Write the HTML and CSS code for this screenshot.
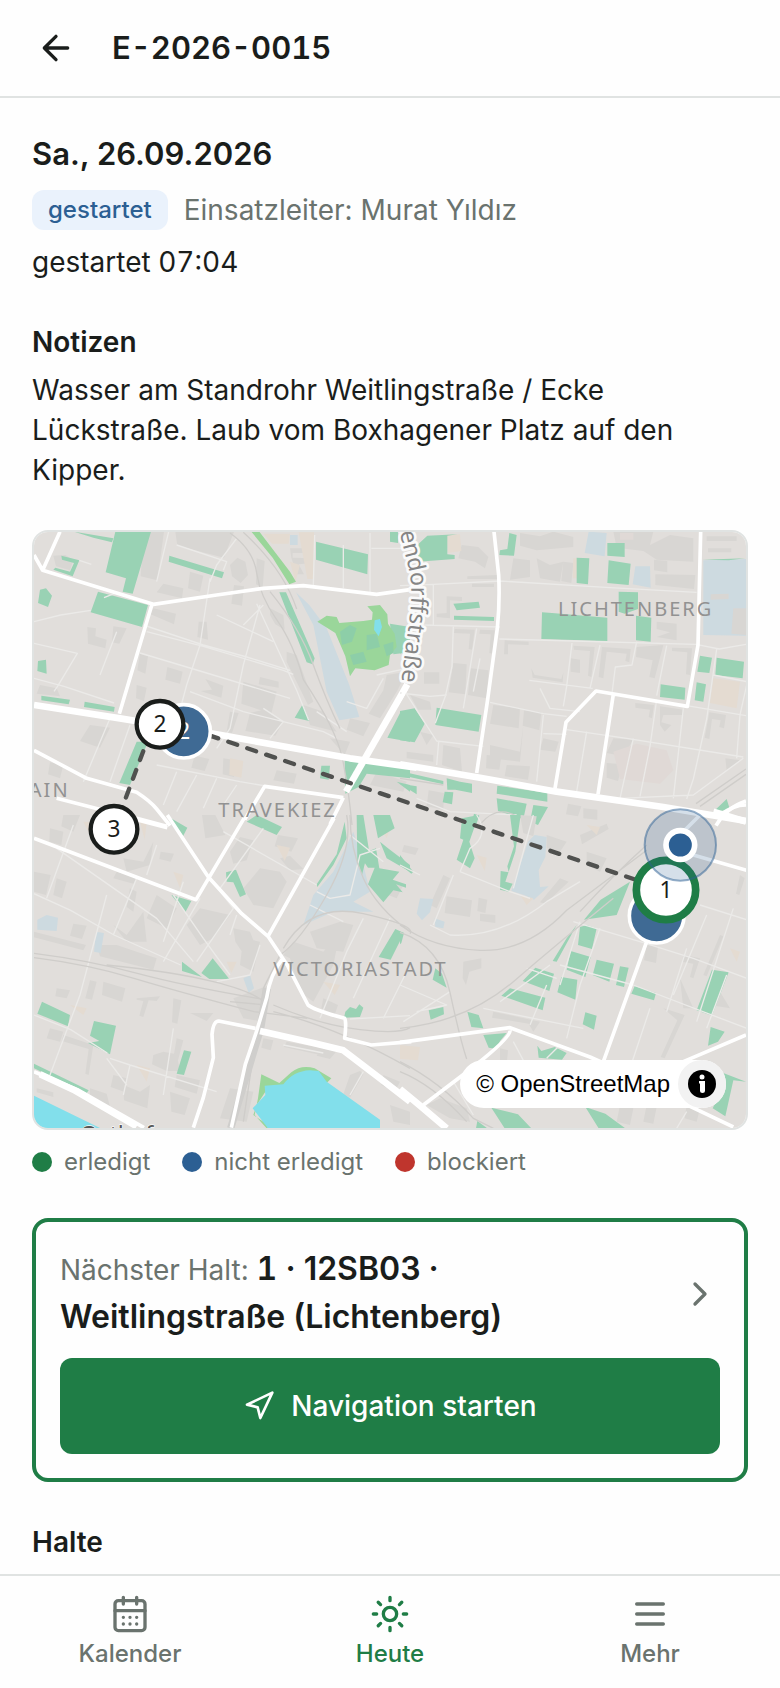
FILE: index.html
```html
<!DOCTYPE html>
<html lang="de">
<head>
    <meta charset="UTF-8">
    <meta name="viewport" content="width=device-width, initial-scale=1.0">
    <title>E-2026-0015</title>
    <link rel="stylesheet" href="styles.css">
</head>
<body>
    <header class="header">
        <button class="back-btn" type="button" aria-label="Zurück">
            <svg class="icon" viewBox="0 0 24 24"><path d="M12 19l-7-7 7-7M19 12H5"/></svg>
        </button>
        <h1 class="title tabular">E-2026-0015</h1>
    </header>

    <main class="content">
        <section class="summary">
            <h2 class="date">Sa., 26.09.2026</h2>
            <div class="status-row">
                <span class="badge">gestartet</span>
                <span class="muted">Einsatzleiter: Murat Yıldız</span>
            </div>
            <p class="tabular">gestartet 07:04</p>
        </section>

        <section class="notes">
            <h3>Notizen</h3>
            <p>Wasser am Standrohr Weitlingstraße / Ecke Lückstraße. Laub vom Boxhagener Platz auf den Kipper.</p>
        </section>

        <section class="overview">
            <div class="map">
                <svg class="map-canvas" viewBox="0 0 2136 1788" preserveAspectRatio="xMidYMid slice" role="img" aria-label="Karte der Halte">
                    <!-- tile north west -->
                    <g transform="translate(-12 -21)">
                        <path class="building" d="M70 92l36-2 24 16-10 30-42-12zM340 20l62 0-20 146-50-12zM436 20l176 0-30 78-140-36zM400 176l60 14-4 30-76-18zM480 140l40 12-10 48-36-10zM600 120l22-22 24 12 8 40-22 24-26-20zM612 180l30 4-6 58-32-6zM680 100l24 8-6 80-20-10zM370 250l68 16-6 32-70-30zM172 306l26 4-2 24 34 10-4 26-52-14zM250 304l40 6-22 46-22-4zM330 386l24 8-8 52-24-10zM412 426l46 14-8 36-44-12zM506 290l24 0 4 54-32-8zM526 462l54 20-6 36-62-20 34-4zM640 470l100 30-16 66-90-30zM690 456l56 14 0 18-60-10zM720 250l40 20 4 44-28-16-16-28zM770 380l30 10 50 140-16 10-64-130zM660 564l40-10 60 34-24 44-90-14zM600 560l26 4-20 60-16-4zM820 540l60 20 40 60-80-20zM900 640l60 10-16 40zM1070 450l60-10-30 60-50 80-34-14 44-70zM960 580l60 14-20 40-50-20zM320 480l30 8-8 40-24-8zM580 700l36 6-4 50-34-8zM494 692l44 10-14 36-40-10zM180 600l60 8-30 60-60-20zM30 480l50 10 10 24-70-8zM60 712l40 8-10 40-36-12zM740 736l60 10-8 30-62-10zM1040 740l90 30-10 30-100-20zM780 70l68 0 0 14-60 0 0 14 58 2 0 14-40 4 16 30-22 0-16-50z"/>
                        <path class="sand" d="M700 26l80 0-4 30-50 0zM806 22l46 0 0 140-20 0zM600 700l40 8-6 50-36-8zM780 110l30 10-14 50z"/>
                        <path class="industry" d="M798 202l40 38 52 70 68 170 30 96-60 10-38-86-40-200zM780 30h23v30h-23z"/>
                        <path class="park" d="M132 20l118 20-4 12-56-14zM256 20h107l-55 186-30-6 10-40-61-18zM94 92l54 14-20 48-58-20 6-6 44 12 12-26-36-10zM204 200l150 40-18 66-154-44zM418 92l164 50-6 18-160-50zM30 194l18-4 18 22-12 34-30-12zM24 408l24-4 2 42-28-8zM34 512l86 12-4 14-82-12zM164 530l90 16-2 14-90-14zM320 650h34l-54 130-32-6zM858 50l156 38-2 60-154-44zM748 202h20l86 198-6 18-18-6zM818 538l20 50-44-10zM1112 560l28-2v92l-68-12zM874 722h26l-4 42-26-4zM944 706l196 20v34l-130-14-24 40-40 20zM1100 770l40 10v20zM1080 20h24v34l-24-4zM1080 296l60 10v76l-50 6z"/>
                        <path class="meadow" d="M664 20h24l92 120 18 30-20 8-50-80zM862 290l28-18 30 4 8 18 72-6 26-4 2-22-16-18 38-4 22 28 2 28 20 30 6 40-20 24-4 30-42 16-58-6-16 24-14-60-30-70z"/>
                        <path class="park soft" d="M930 320l30-20 20 10-14 40-30 10zM1010 330l30-4 10 40-40 10zM960 390l40-10 10 30-40 10zM1060 360l30-10v34l-20 10z"/>
                        <path class="water" d="M1034 286l16-4 6 24-10 28-14-20z"/>
                        <path class="lane" d="M12 290l80-20 90-14M12 355l130 30-60 100-10 14M148 106l36 12M262 202l-40 16M340 300l180 60 130 36 130 40M350 320l170 44 240 72 30 12M330 384l200 60 250 76M416 20l-36 150M440 60l150 50-10 26M540 160l-30 200-40 120-16 60M690 240l-50 180-40 190-40 60M560 270l170 80M680 236l120 260 36 90M640 300l60-60M12 460l90 24 150 50M260 320l-50 130M620 40l-60 80-20 50M480 500l160 60 240 60 40 20M700 550l60 40-40 50M854 30l-4 150M940 60v130M1020 24v180M1024 70h116M240 580l-80 190M300 600l-60 170M380 720l250 50 120 20M440 740l-40 100M500 750l-60 110M560 760l-40 90M620 780l-40 60M860 560l90 60M1060 460l-50 90-60-20M1040 450l90-20"/>
                        <path class="rail" d="M600 24q70 50 80 120t60 140 80 180q100 150 118 240t28 196M720 200q90 110 130 220t80 190M640 22q120 110 160 230"/>
                        <path class="road" d="M90 20L38 136l332 102 190-28 140-20 120-8 220 26 100-14M12 90l26 46M366 238l-98 328M12 676l158 84 150 42q40 26 60 50l40 50M80 820l140 36M320 880l90 24M940 818l-236-34-60 100M940 818l-40 80"/>
                        <path class="road wide" d="M12 540l258 40 290 48 400 72 200 28"/>
                        <path class="road wide" d="M1132 478L948 800"/>
                    </g>
                    <!-- tile north east -->
                    <g transform="translate(1098 -21)">
                        <path class="building" d="M185 60l50 6 30 30-10 34-30-20-50-10zM360 24l60 10 40-14 60 16v30l-110 10-50-14zM340 100l50 6v50l-60 8zM410 100l40 20 40-10-10 60-60-10zM490 110l30 4-6 60-30-6zM202 154l90-4v12h-90zM216 176h66v10h-66zM140 214l46 2v12l-36-2v54l-40-4v-10l30-2zM164 312l60 2-8 60-10-2 4-46-48-2zM240 314l44 2-6 70-10-2 4-56-34-2zM160 414l40 4-4 90-50-6zM212 430l54 6-6 84-56-10zM72 442h46v34h-46zM314 346l72 4v10l-62-2v30h-12zM394 430l10 20 80 12 6-20-2 30-90-14zM520 362l64 4-10 90-10-4 6-74-48-4zM606 366l86 6-4 40-12-4 4-22-60-6-10 80-14-4zM512 400l28 4v40l-28-4zM710 366l80-6-26 100-16-4 10-50-50-10zM816 368l60 2-6 80-12-2 4-66-46-4zM640 20l120 0-10 40 60-30 70 10v70l-110-6-40-26-80-10zM766 148l120 2-4 42-116-12zM762 104l40 4v34l-40-6zM770 290l60 6v50l-60-10 40-14-40-10zM920 34l90 0v14h-90zM924 70h70v12h-70zM280 540l80 10-4 60-86-14zM372 556l52 6-6 54-50-14zM270 660l90 20 10-80-10 110-90-10zM430 640l46 10-10 30-46-6zM706 534l56 6-6 40-10-4 4-22-44-6zM780 544l70 10v16l-60 0-6 22 30 8-20 20-14-20zM928 562l50 8-6 40-14-4 4-20-26-4-8 60-14-4zM640 640l60 4-30 50-50-10zM720 690l60 0 20 30-16 40-60-6-10-40zM620 714l48 4-14 50-34-10zM976 700l44 6-40 30zM30 510l60 20 4 24-40 0zM60 620l40 10-20 30zM130 660l50 10 6 70-60-20zM20 680l80 10v20l-80-10zM504 836l40 8-10 30-36-6zM550 850l42 4v30l-42-4zM86 796l46 8-2 50-50-10zM260 690l44 4-6 40-40-4zM320 720l70 4-6 40-70-10z"/>
                        <path class="sand" d="M140 30l40-2 4 50-40 6zM940 460l80 10-10 80-80-16zM520 100l16 0-4 60-14 0z"/>
                        <path class="clinic" d="M640 680l70-24 90 20 20 60-40 40-120-14zM660 24l40 0v20h-40z"/>
                        <path class="industry" d="M910 106l128-4v230l-128-2zM566 20l54 4-6 70-60-10zM706 124h44l2 64-54-10z"/>
                        <path class="building" d="M932 208l54-2v16l-54 2zM1000 250h38v80l-44-4z"/>
                        <path class="park" d="M52 60l30-28 90-4-30 4v56l22 2v12l-110 8zM328 24l22 6-8 62-44-2 2-14 22-4zM530 98l38 2-4 78-34-4zM622 54h52v42l-52-4zM626 106l66 10-6 64-64-6zM656 200l58 2v50l-40 14-18-6zM426 262l30 2 166 14v70l-198-6zM708 272l46 6-2 72-44-4zM160 236l76-6 4 18-70 8zM162 272l120 4v12l-120-4zM900 392l36 6-8 46-36-4zM950 398l82 12-4 50-82-10zM890 472l28 6-8 52-26-4zM782 478l74 10-2 36-74-8zM110 548l134 22-8 50-130-20zM0 558l44-8 30 46-30 56-44-6zM0 306l14 0v70l-14 10zM0 738l130 30v10L0 750zM0 776l50 8v24zM140 760l40 10 36 6v28l-50-10-24 0zM134 800l26 2-4 36-28-6zM292 782l150 22v26l-152-24zM290 820l90 16-10 46-76-24zM400 840l44 6-30 54-24-10zM222 866l16 6-10 28h-14zM980 822l10 32-50 6zM906 104l130-4-50 6z"/>
                        <path class="lane" d="M0 182l100-4 200-10 330 20 260 14M70 300l230 6M298 342l590 16 70 14 80-14M100 180v120M160 304l-4 120-20 90-30 80M230 310l-20 120-20 120M0 504l90 10 50-4M270 532l160 34 70 8M20 508l90 140 140 16M116 650l-6 70M240 400l-20 100M430 570l-20 200M430 626l70 2M500 614l180 26 350 56M560 620l-30 180M516 354l-16 130-10 60M600 360l-30 130M710 350l-14 70-50 6-10 80M800 362l-30 150M388 466l190 24M420 490l30 60 90 10M700 640l-40 180M770 524l-20 140-30 150M850 550l-30 270M950 372l-30 210-40 180-20 60M1040 480l-20 90-10 130M940 450l100 20M860 542l180 30M660 820l220-10 150-110M50 820l100 40 200 10"/>
                        <path class="rail" d="M888 836l150-104M900 844l138-96M0 760l130 20M240 898q50-60 110-24"/>
                        <path class="road" d="M282 20l14 130q4 80-4 160l-30 220-32 214M902 20l-8 340-32 184-274-46-90 94-34 204M640 508l-46 300M1038 828q-60 20-90 74M-10 540l30-50"/>
                        <path class="road wide" d="M0 718l240 40 230 42 320 46 248 42"/>
                    </g>
                    <!-- tile south west -->
                    <g transform="translate(-12 849)">
                        <path class="building" d="M12 170l50 10-14 60-36-10zM80 190l30 10-14 50-26-10zM60 40l40 10-6 40-36-10zM100 0l50 0-20 50-36-16zM280 130l60 10 30-60-10 70-70 20zM260 170l60 20-10 16-60-16zM300 220l20 10-10 60-20-14zM392 110l40 6-10 24-34-8zM516 0l40 0 30 60-60 10zM600 110l30-44 40 10-20 60-40 10zM744 60l60 10-20 40-50-16zM750 130l30-8 40 40-40 4zM640 220l50-60 60 10 20 30-40 80-60-10zM380 240l60 40-30 60-60-30zM470 330l40-50 90 20-50 70-40 20zM250 330l40 30 50-70 10 90-60 0zM130 326l40 6-14 40-36-10zM200 390l60 0 60 20 60 20-10 34-160-40zM12 350l156 40-8 16-150-40zM610 340l50 10 16 40-40 20-20-30zM640 370l50 10-20 90-40-20zM80 520l40 6-10 24-34-6zM180 496l20 4-14 54-20-4zM220 500l66 20-10 40-60-20zM320 550l70-6-10 14-24-2-16 50-12-4 12-44-20-4zM430 550l24 6-12 70-16-4zM480 594l70 0-20 24-20-10zM370 720l30-10 40 8 10 50-40 0-44-20zM440 670l20 6-16 60-14-6zM100 660l90 30-14 90-10-4 10-74-80-24zM60 640l40 10-10 30-40-10zM250 780l40 10-8 40-40-14zM280 810l50 20 30-20-8 70-70-24zM440 780l70 16-10 40-66-20zM420 830l60 20-16 50-40-10zM180 820l50 16 10 40-60-24zM20 820l50 12v14l-50-14zM700 670l30 6-8 30-28-8zM770 680l110 20-8 20-110-24zM870 700l50 8-20 24-40-10zM960 780l30-12 10 10-40 70-20-10zM1060 780l50 20-16 30-40-20zM1080 870l60 20v40l-50-10zM790 380l90 30 50-60-20 100-60 110-40-30-30-100-20-10zM840 350l90-30 40 10-30 80-80-10zM880 550l44 20-10 30-40-20zM600 820l70 10-20 90-80-10zM1060 180l60 30-20 40-50-20z"/>
                        <path class="building" d="M610 550l110-40-20 110-60-10z"/>
                        <path class="sand" d="M160 20l30 0-10 40zM330 20l20 4-6 50zM430 170l30 10-10 40zM590 440l30 0-16 34zM320 750l40 10-10 40zM880 500l50 10-16 30zM740 90l40 8-16 40zM1040 20l40 20-10 30zM120 570l50 10-10 20z"/>
                        <path class="industry" d="M910 170l60-120 20 60 30 120-50 30 60 30-120 0-90 40 30-90zM50 300l34 8-4 40-58-4v-30zM198 350l24 4-10 60-20-4zM640 490l20-10 12 40-16 14z"/>
                        <path class="park" d="M410 2l62 36-16 32-30-40zM650 20l30-20 76 36-16 24zM588 172l30-8 30 74-18 8-20-44-20-2zM424 240l60 18-18 34zM456 440l60 46-60-18zM548 430l50 62h-60l-24-18zM944 20l6 50-40 80-48 66-2-8 60-90zM980 0h20l16 100-20 80-14-40zM1030 0h50l14 40-50 30zM1050 80l24 20 66 50v20l-70-40zM988 120l50-20 10 60 60 10-20 24 40 14v10l-30-10 20 24-28-6-30 36-46-54 20-50-20 0zM1096 342l26 12-40 80-36-8zM36 560l84 40-6 34-92-38zM192 618l66 14-18 86-66-34 34-6-28-16zM462 706l22 4-22 70-22-4zM946 590l14-14 18 6 10-14 12 10-10 28-48 2zM12 746l164 80-6 8L12 760z"/>
                        <path class="meadow" d="M694 778l54 26 36-32q30-24 70-12l50 30-14 14-60-20-70 30-50 10-30 46-10 30 50 34-10 6-36-40 10-50z"/>
                        <path class="water" d="M704 812l56-4q30-40 80-42l26 2 24 32 160 114v26H714l-46-60 38-40zM12 842l200 98H12z"/>
                        <path class="lane" d="M130 30L50 250M12 236l110 50 130 74 200 90M230 240l-80 300-90 240M430 240l90 130 80 110M510 250l-110 190M320 190l-70 170M12 600l110 44 110 70M240 730l60 20 260 80M230 730l60 80M80 100l300 210 110 130M540 190l70 90-110 160M580 50l280 160M700 40l-130 180M620 300l-20 60M690 390l-30 90-100 20M380 90l-30 90M460 200l-60 180M1050 100l-60 20-30 120-60 10-40-20M960 60l100 80M1000 310l-50 100-80 200M1080 310l-110 240M1140 450l-80 160M960 612l180-10M840 270l100 50M760 690l120 24M1000 770l-40 70M300 750l-20 90M430 640l-30 200"/>
                        <path class="rail" d="M12 415q160 20 310 60t390 80M12 428q160 20 300 62t360 100l160 20M230 450q200 20 320 50t150 60M950 0q20 100-60 240t-140 180l-50 100-60 400M960 0q0 100 40 190t140 160M760 400q80-140 240-104t140 60M730 570q140 60 260 74t150-6M730 590q200 50 410 170M600 560l110 10"/>
                        <path class="rail-bed" d="M712 520l-20 120-90 300"/>
                        <path class="road" d="M412 0l123 186 100 110 79 68 60 90 60 116q20 16 110 40 6 10 0 60l80 20 120-10M642 10L498 254 12 70M320 14l92 24M912 10L714 364M760 428q-40 50-50 120l-30 100-34 100-42 190M676 640l-110-22q-16 0-20 40l4 70-30 120-30 90M12 770l130 54 200 114"/>
                        <path class="road wide" d="M690 648l160 36 90 22 110 84 90 70M30 778l100 46 190 110"/>
                    </g>
                    <!-- tile south east -->
                    <g transform="translate(1098 849)">
                        <path class="building" d="M130 180l20 10-40 90-20-10zM140 244l76 12-6 50-76-12zM236 248l26 6-6 40-24-6zM240 296l46 4v24l-46-6zM540 60l80-34 6 16-80 46zM480 190l26 10-70 66-16-4zM12 90l44 10-10 20-40-10zM190 440l54-10v30l-36 10-10 40-10-20zM280 590l140 30-20 30-14-24-110-18zM300 700l24 6-4 40-20-10zM740 390l34 4-6 50-36-8zM850 420l50 10-20 60-10-4 10-40-34-6zM840 490l40 90-30 0zM960 360l10 4-50 120-10-4zM960 530l-30 40 60 10zM790 580l64 20-60 130-12-4 50-110zM120 850l80 30 10 40-60-10-70-40zM660 870l40 10-10 50-40-10zM740 870l30 6-10 50-30-6zM560 110l60 20-20 40-40-20zM860 870l40 10-10 40-36-10zM1020 180l14 10-16 50-10-4zM440 60l60 20-20 30-40-10zM360 0l50 4-10 60-30-10z"/>
                        <path class="industry" d="M384 80l20-20 36 6-4 60-20 40 4 50 26-2-44 40-30-14-38-12zM60 250l40 2-10 40-24 24-16-20zM104 310l30 10-4 20-24-4z"/>
                        <path class="sand" d="M560 30l40 6-10 24zM230 120l30 8-6 40zM0 690l60 6-6 40-54-4zM360 240l40 10-20 20zM990 400l30 10-10 30z"/>
                        <path class="park" d="M186 10l50-10-28 80 16 50-14 30-40-26 20-60-10-4zM330 0h32l-16 110-30 90 22 6-12 24-26-6 2-56 24 4-4-18 20-60zM0 120l40 50-6 6-34-28zM690 200l-40 100-98 14 50-60zM540 336l20-6 30 10-14 62-42-12zM500 370l30-40-60 110-12-2zM512 408l60 18-16 60-56-22zM590 434l52 12-14 54-50-20zM660 454l26 4-14 58-24-6zM406 458l56 18-14 52-80-30zM484 486l48 8-6 60-54-22zM330 520l106 28-8 38-124-44zM556 592l34 10-8 42-34-16zM704 514l64 20-6 22-68-20zM936 464l50 8-50 130-46-16zM932 636l42 14-20 30-30 12zM106 460l20 16 14 42-42-24zM86 586l44-10 2 22-40 16zM202 590l34 10 14 40-36-4zM250 660l70-6-20 24-10 24-24-4zM412 692l12 16 40-12 36 18-14 20-70-6zM274 878l80 20 40 42h-80zM556 876l60 20 60 44h-80zM232 918l30 22h-34zM960 770l78 30-38-4-24 108-38-24 30-60zM0 350l12 4-8 30-4 4z"/>
                        <path class="lane" d="M60 180L0 150M180 170l150 60 60 20M520 320l200 60 160 50 160 60M540 320l-60 190M600 340l-60 170-40 160M480 450l220 60 340 130M380 460l90 30M440 510l-50 120M250 580l300 60M1000 280l-110 340M920 300l-100 240M860 400l-60 190M980 480l-60 160M300 560l150-110M750 580l-60 180M0 510l140 60-90 20M150 530l-140 90M340 680l30 56M480 690l-40 40M230 0q40 60-20 100l-30 70M400 0l-60 220M90 330l60 30q150 10 290-100l100-60M900 270l140 44M160 180l-60 150M160 800l60 100M860 890l-30 50"/>
                        <path class="rail" d="M0 330q100 70 240 76t260-120l240-180M0 352q120 40 150 180t50 200M0 640q200-20 340-140t300-250M740 90Q640 180 540 290M0 740q120 60 220 170l60 30M0 770q100 40 200 150"/>
                        <path class="road" d="M740 380L610 740M0 682l330-44 240 88 40 18M330 646q4 20-110 110L70 870M1038 660L850 740M900 0l-100 100M880 120l160 46M960 0q40-30 78-30M820 850l180 86"/>
                        <path class="road wide" d="M940-10l98 30M0 822l60 50 80 68"/>
                    </g>

                    <g class="labels">
                        <text x="1572" y="251">LICHTENBERG</text>
                        <text x="553" y="856">TRAVEKIEZ</text>
                        <text x="718" y="1332">VICTORIASTADT</text>
                        <text x="-66" y="795">HAIN</text>
                    </g>
                    <path id="street" class="street-path" d="M1094 -24C1104 50 1132 110 1132 180S1112 350 1098 490"/>
                    <text class="street"><textPath href="#street" startOffset="6">lendorffstraße</textPath></text>
                    <text class="station" x="138" y="1834">Osthafen</text>

                    <path class="route" d="M366 556L1896 1074"/>
                    <path class="route" d="M366 556L240 892"/>

                    <!-- stops -->
                    <g class="stops">
                        <circle class="visited" cx="449" cy="598" r="80"/>
                        <text class="visited-no" x="449" y="622">2</text>
                        <circle class="stop" cx="378" cy="577" r="70"/>
                        <text x="378" y="601">2</text>
                        <circle class="stop" cx="240" cy="892" r="70"/>
                        <text x="240" y="916">3</text>
                        <circle class="visited" cx="1868" cy="1151" r="82"/>
                        <circle class="stop next" cx="1896" cy="1074" r="89"/>
                        <text x="1896" y="1098">1</text>
                    </g>
                    <circle class="accuracy" cx="1939" cy="939" r="107"/>
                    <circle class="position" cx="1939" cy="939" r="43"/>
                </svg>
                <div class="attribution">
                    <a href="#">© OpenStreetMap</a>
                    <button class="info-btn" type="button" aria-label="Quellenangaben">
                        <svg viewBox="0 0 28 28"><circle cx="14" cy="14" r="14"/><circle class="info-mark" cx="14" cy="7" r="2.5"/><path class="info-mark" d="M11 11h6v10q0 2-2.500 2t-2.500-2v-7.500h-1z"/></svg>
                    </button>
                </div>
            </div>
            <ul class="legend">
                <li><span class="dot done"></span>erledigt</li>
                <li><span class="dot open"></span>nicht erledigt</li>
                <li><span class="dot blocked"></span>blockiert</li>
            </ul>
        </section>

        <section class="next-card">
            <a class="next-link" href="#">
                <span class="next-text">Nächster Halt: <strong><span class="tabular">1</span> · 12SB03 · Weitlingstraße (Lichtenberg)</strong></span>
                <svg class="icon" viewBox="0 0 24 24"><path d="M9 18l6-6-6-6"/></svg>
            </a>
            <button class="nav-btn" type="button">
                <svg class="icon small" viewBox="0 0 24 24"><path d="M3 11l19-9-9 19-2-8-8-2z"/></svg>
                Navigation starten
            </button>
        </section>

        <h3>Halte</h3>
    </main>

    <nav class="tab-bar">
        <a href="#">
            <svg class="icon" viewBox="0 0 24 24"><path d="M8 2v4M16 2v4M3 10h18M8 14h.01M12 14h.01M16 14h.01M8 18h.01M12 18h.01M16 18h.01"/><rect x="3" y="4" width="18" height="18" rx="2"/></svg>
            Kalender
        </a>
        <a href="#" class="active">
            <svg class="icon" viewBox="0 0 24 24"><circle cx="12" cy="12" r="4"/><path d="M12 2v2M12 20v2M4.93 4.93l1.41 1.41M17.66 17.66l1.41 1.41M2 12h2M20 12h2M6.34 17.66l-1.41 1.41M19.07 4.93l-1.41 1.41"/></svg>
            Heute
        </a>
        <a href="#">
            <svg class="icon" viewBox="0 0 24 24"><path d="M4 6h16M4 12h16M4 18h16"/></svg>
            Mehr
        </a>
    </nav>
</body>
</html>
```
FILE: styles.css
```css
/* Reset & Variables */
* {
    margin: 0;
    padding: 0;
    box-sizing: border-box;
}

:root {
    --green: #1f7d46;
    --blue: #2c5f93;
    --red: #bf352d;
    --text: #1a1d1b;
    --muted: #6a736e;
    --border: #e0e3e2;
    --bg: #fefefe;
}

body {
    font-family: Inter, sans-serif;
    font-size: 28px;
    line-height: 40px;
    color: var(--text);
    background-color: var(--bg);
    padding-bottom: 114px;
}

a {
    color: inherit;
    text-decoration: none;
}

button {
    font: inherit;
    border: none;
    cursor: pointer;
}

h3 {
    font-size: 28px;
    font-weight: 600;
}

.tabular {
    font-variant-numeric: tabular-nums;
}

.muted {
    color: var(--muted);
}

.icon {
    width: 40px;
    height: 40px;
    flex: none;
    fill: none;
    stroke: currentColor;
    stroke-width: 2;
    stroke-linecap: round;
    stroke-linejoin: round;
}

.icon.small {
    width: 32px;
    height: 32px;
}

/* Header */
.header {
    display: flex;
    align-items: center;
    gap: 12px;
    padding: 4px 12px;
    border-bottom: 2px solid var(--border);
}

.back-btn {
    display: flex;
    align-items: center;
    justify-content: center;
    width: 88px;
    height: 88px;
    color: inherit;
    background: none;
}

.title,
.date {
    font-size: 31px;
    line-height: 48px;
    font-weight: 600;
}

/* Content */
.content {
    display: flex;
    flex-direction: column;
    gap: 40px;
    padding: 32px;
}

.summary {
    display: flex;
    flex-direction: column;
    gap: 12px;
}

.status-row {
    display: flex;
    align-items: center;
    gap: 16px;
}

.badge {
    padding: 0 16px;
    border-radius: 12px;
    font-size: 24px;
    font-weight: 500;
    color: var(--blue);
    background-color: #eaf2fc;
}

.notes {
    display: flex;
    flex-direction: column;
    gap: 8px;
}

.overview {
    display: flex;
    flex-direction: column;
    gap: 16px;
}

/* Map */
.map {
    position: relative;
    height: 600px;
    border: 2px solid var(--border);
    border-radius: 16px;
    overflow: hidden;
}

.map-canvas {
    display: block;
    width: 100%;
    height: 100%;
    background-color: #e1dedb;
}

.building { fill: #d8d6d3; }
.sand { fill: #e4dbd1; }
.clinic { fill: #e0d9d6; }
.industry { fill: #cddae0; }
.park { fill: #99d2b4; }
.park.soft { fill: #8dcea8; }
.meadow { fill: #9ad69a; }
.water { fill: #82dfeb; }

.lane, .rail, .rail-bed, .road, .route, .street-path {
    fill: none;
    stroke-linejoin: round;
}

.lane {
    stroke: #ebeae8;
    stroke-width: 4;
}

.rail {
    stroke: #cfcdca;
    stroke-width: 4;
}

.rail-bed {
    stroke: #cfcecc;
    stroke-width: 22;
}

.road {
    stroke: #ffffff;
    stroke-width: 11;
}

.road.wide {
    stroke-width: 20;
}

.labels {
    font-family: "Noto Sans", sans-serif;
    font-size: 60px;
    letter-spacing: 6px;
    fill: #929292;
}

.street, .station {
    font-family: "Noto Sans", sans-serif;
    font-size: 70px;
    fill: #858585;
    stroke: #fafafa;
    stroke-width: 16;
    stroke-linejoin: round;
    paint-order: stroke;
}

.station {
    fill: #555555;
    stroke-width: 4;
}

.route {
    stroke: #50514f;
    stroke-width: 13;
    stroke-linecap: round;
    stroke-dasharray: 28 32;
    stroke-dashoffset: 11;
}

.stops text {
    font-family: "Noto Sans", sans-serif;
    font-size: 68px;
    text-anchor: middle;
    fill: #1a1d1b;
}

.stops .visited-no {
    fill: #ffffff;
}

.visited {
    fill: #3f6a94;
    stroke: #ffffff;
    stroke-width: 11;
}

.stop {
    fill: #ffffff;
    stroke: #1a1d1b;
    stroke-width: 13;
}

.stop.next {
    stroke: #1f7d46;
    stroke-width: 23;
}

.accuracy {
    fill: rgba(44, 95, 147, 0.2);
    stroke: rgba(44, 95, 147, 0.5);
    stroke-width: 6;
}

.position {
    fill: #2c5f93;
    stroke: #ffffff;
    stroke-width: 17;
}

.attribution {
    position: absolute;
    right: 20px;
    bottom: 20px;
    display: flex;
    align-items: center;
    gap: 8px;
    padding-left: 16px;
    border-radius: 24px;
    font-family: "Liberation Sans", sans-serif;
    font-size: 24px;
    color: #000000;
    background-color: #ffffff;
}

.info-btn {
    width: 48px;
    height: 48px;
    padding: 10px;
    border-radius: 24px;
    background-color: #f2f2f2;
}

.info-btn svg {
    display: block;
}

.info-mark {
    fill: #ffffff;
}

/* Legend */
.legend {
    display: flex;
    flex-wrap: wrap;
    gap: 0 32px;
    list-style: none;
    font-size: 24px;
    line-height: 32px;
    color: var(--muted);
}

.legend li {
    display: flex;
    align-items: center;
    gap: 12px;
}

.dot {
    width: 20px;
    height: 20px;
    border-radius: 50%;
}

.dot.done { background-color: var(--green); }
.dot.open { background-color: var(--blue); }
.dot.blocked { background-color: var(--red); }

/* Next stop */
.next-card {
    display: flex;
    flex-direction: column;
    gap: 16px;
    padding: 24px;
    border: 4px solid var(--green);
    border-radius: 16px;
}

.next-link {
    display: flex;
    align-items: center;
    justify-content: space-between;
    gap: 16px;
    line-height: 48px;
    color: var(--muted);
}

.next-text strong {
    font-size: 32px;
    line-height: 40px;
    font-weight: 600;
    color: var(--text);
}

.nav-btn {
    display: flex;
    align-items: center;
    justify-content: center;
    gap: 16px;
    height: 96px;
    border-radius: 12px;
    font-weight: 500;
    color: #ffffff;
    background-color: var(--green);
}

/* Tab bar */
.tab-bar {
    position: fixed;
    left: 0;
    right: 0;
    bottom: 0;
    display: grid;
    grid-template-columns: repeat(3, 1fr);
    border-top: 2px solid var(--border);
    background-color: var(--bg);
}

.tab-bar a {
    display: flex;
    flex-direction: column;
    align-items: center;
    gap: 4px;
    padding: 18px 0;
    font-size: 24px;
    line-height: 32px;
    font-weight: 500;
    color: var(--muted);
}

.tab-bar .active {
    color: var(--green);
}
```
